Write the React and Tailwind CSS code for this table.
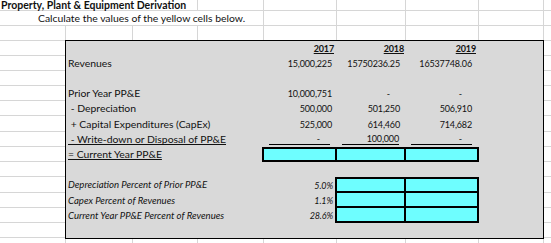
import React from "react";

const G = "border-[#d6d6d6]";

function TopRow({ h, children }) {
  return <div className={`flex ${h}`}>{children}</div>;
}

const rowH = [
  "h-[15px]", "h-[15px]", "h-[15px]", "h-[15px]", "h-[15px]", "h-[16px]", "h-[15px]",
  "h-[15px]", "h-[15px]", "h-[16px]", "h-[15px]", "h-[15px]", "h-[15px]",
];

function Num({ w, pr, children, className = "" }) {
  return (
    <div className={`${w} h-full flex items-center justify-end text-[9px] tracking-[-0.15px] ${pr} ${className}`}>
      {children}
    </div>
  );
}

function Label({ children, className = "" }) {
  return (
    <div className={`w-[197px] h-full flex items-center pl-[2px] whitespace-nowrap ${className}`}>
      {children}
    </div>
  );
}

export default function App() {
  const font = { fontFamily: "Lato, 'Open Sans', sans-serif" };
  return (
    <div className="w-[551px] h-[243px] overflow-hidden bg-white text-[10.4px] leading-none text-[#111]" style={font}>
      {/* top rows */}
      <TopRow h="h-[11px]">
        <div className={`w-[198px] h-full border-b ${G} border-r flex items-center pl-[1px] font-bold whitespace-nowrap text-[10.5px] leading-[11px]`}>
          Property, Plant &amp; Equipment Derivation
        </div>
        <div className={`w-[66px] h-full border-b border-r ${G}`} />
        <div className={`w-[73px] h-full border-b border-r ${G}`} />
        <div className={`w-[69px] h-full border-b border-r ${G}`} />
        <div className={`w-[73px] h-full border-b border-r ${G}`} />
        <div className={`w-[65px] h-full border-b border-r ${G}`} />
        <div className={`flex-1 h-full border-b ${G}`} />
      </TopRow>
      <TopRow h="h-[15px]">
        <div className={`w-[264px] h-full border-b border-r ${G} flex items-center pl-[38px] whitespace-nowrap text-[10.4px]`}>
          Calculate the values of the yellow cells below.
        </div>
        <div className={`w-[73px] h-full border-b border-r ${G}`} />
        <div className={`w-[69px] h-full border-b border-r ${G}`} />
        <div className={`w-[73px] h-full border-b border-r ${G}`} />
        <div className={`w-[65px] h-full border-b border-r ${G}`} />
        <div className={`flex-1 h-full border-b ${G}`} />
      </TopRow>
      <TopRow h="h-[14px]">
        <div className={`w-[66px] h-full border-r ${G}`} />
        <div className={`w-[67px] h-full border-r ${G}`} />
        <div className={`w-[65px] h-full border-r ${G}`} />
        <div className={`w-[66px] h-full border-r ${G}`} />
        <div className={`w-[73px] h-full border-r ${G}`} />
        <div className={`w-[69px] h-full border-r ${G}`} />
        <div className={`w-[73px] h-full border-r ${G}`} />
        <div className={`w-[65px] h-full border-r ${G}`} />
        <div className="flex-1 h-full" />
      </TopRow>

      {/* middle block */}
      <div className="flex">
        <div className={`w-[65px] flex flex-col border-t ${G}`}>
          {rowH.map((h, i) => (
            <div key={i} className={`${h} border-b ${G}`} />
          ))}
        </div>
        <div className="w-[479px] border border-black bg-[#d9d9d9] flex flex-col">
          {/* header */}
          <div className={`flex ${rowH[0]} font-bold`}>
            <div className="w-[197px]" />
            <Num w="w-[73px]" pr="pr-[2px]"><span className="underline">2017</span></Num>
            <Num w="w-[69px]" pr="pr-[1px]"><span className="underline">2018</span></Num>
            <Num w="w-[73px]" pr="pr-[2px]"><span className="underline">2019</span></Num>
          </div>
          <div className={`flex ${rowH[1]}`}>
            <Label>Revenues</Label>
            <Num w="w-[73px]" pr="pr-[4px]">15,000,225</Num>
            <Num w="w-[69px]" pr="pr-[5px]">15750236.25</Num>
            <Num w="w-[73px]" pr="pr-[6px]">16537748.06</Num>
          </div>
          <div className={rowH[2]} />
          <div className={`flex ${rowH[3]}`}>
            <Label>Prior Year PP&amp;E</Label>
            <Num w="w-[73px]" pr="pr-[4px]">10,000,751</Num>
            <Num w="w-[69px]" pr="pr-[15px]">-</Num>
            <Num w="w-[73px]" pr="pr-[16px]">-</Num>
          </div>
          <div className={`flex ${rowH[4]}`}>
            <Label>&nbsp;- Depreciation</Label>
            <Num w="w-[73px]" pr="pr-[4px]">500,000</Num>
            <Num w="w-[69px]" pr="pr-[5px]">501,250</Num>
            <Num w="w-[73px]" pr="pr-[6px]">506,910</Num>
          </div>
          <div className={`flex ${rowH[5]}`}>
            <Label>&nbsp;+ Capital Expenditures (CapEx)</Label>
            <Num w="w-[73px]" pr="pr-[4px]">525,000</Num>
            <Num w="w-[69px]" pr="pr-[5px]">614,460</Num>
            <Num w="w-[73px]" pr="pr-[6px]">714,682</Num>
          </div>
          <div className={`flex ${rowH[6]}`}>
            <Label><span className="underline whitespace-pre"> - Write-down or Disposal of PP&amp;E</span></Label>
            <div className="w-[73px] h-full px-[6px] pb-[2px] text-[9px]">
              <div className="h-full border-b border-black flex items-center justify-end pr-[10px]">-</div>
            </div>
            <div className="w-[69px] h-full px-[6px] pb-[2px] text-[9px] tracking-[-0.15px]">
              <div className="h-full border-b border-black flex items-center justify-end">100,000</div>
            </div>
            <div className="w-[73px] h-full px-[6px] pb-[2px] text-[9px]">
              <div className="h-full border-b border-black flex items-center justify-end pr-[10px]">-</div>
            </div>
          </div>
          <div className={`flex ${rowH[7]}`}>
            <div className="w-[196px] h-full flex items-center pl-[2px] whitespace-nowrap">
              <span className="underline">= Current Year PP&amp;E</span>
            </div>
            <div className="w-[217px] h-full border-2 border-black bg-[#6efeff] flex">
              <div className="w-[71px] h-full" />
              <div className="w-[69px] h-full border-l-2 border-black" />
              <div className="flex-1 h-full border-l-2 border-black" />
            </div>
          </div>
          <div className={rowH[8]} />
          {[
            ["Depreciation Percent of Prior PP&E", "5.0%"],
            ["Capex Percent of Revenues", "1.1%"],
            ["Current Year PP&E Percent of Revenues", "28.6%"],
          ].map(([label, pct], i) => (
            <div key={i} className={`flex ${rowH[9 + i]} italic`}>
              <Label className="text-[9.6px]">{label}</Label>
              <Num w="w-[72px]" pr="pr-[2px]">{pct}</Num>
              <div
                className={`w-[144px] h-full border-x-2 border-b-2 border-black bg-[#6efeff] flex ${
                  i === 0 ? "border-t-2" : ""
                }`}
              >
                <div className="w-[67px] h-full" />
                <div className="flex-1 h-full border-l-2 border-black" />
              </div>
            </div>
          ))}
          <div className={rowH[12]} />
        </div>
        <div className={`flex-1 flex flex-col border-t ${G}`}>
          {rowH.map((h, i) => (
            <div key={i} className={`${h} border-b ${G}`} />
          ))}
        </div>
      </div>

      {/* bottom row */}
      <div className="flex h-[6px]">
        <div className={`w-[66px] h-full border-r ${G}`} />
        <div className={`w-[67px] h-full border-r ${G}`} />
        <div className={`w-[65px] h-full border-r ${G}`} />
        <div className={`w-[66px] h-full border-r ${G}`} />
        <div className={`w-[73px] h-full border-r ${G}`} />
        <div className={`w-[69px] h-full border-r ${G}`} />
        <div className={`w-[73px] h-full border-r ${G}`} />
        <div className={`w-[65px] h-full border-r ${G}`} />
        <div className="flex-1 h-full" />
      </div>
    </div>
  );
}
